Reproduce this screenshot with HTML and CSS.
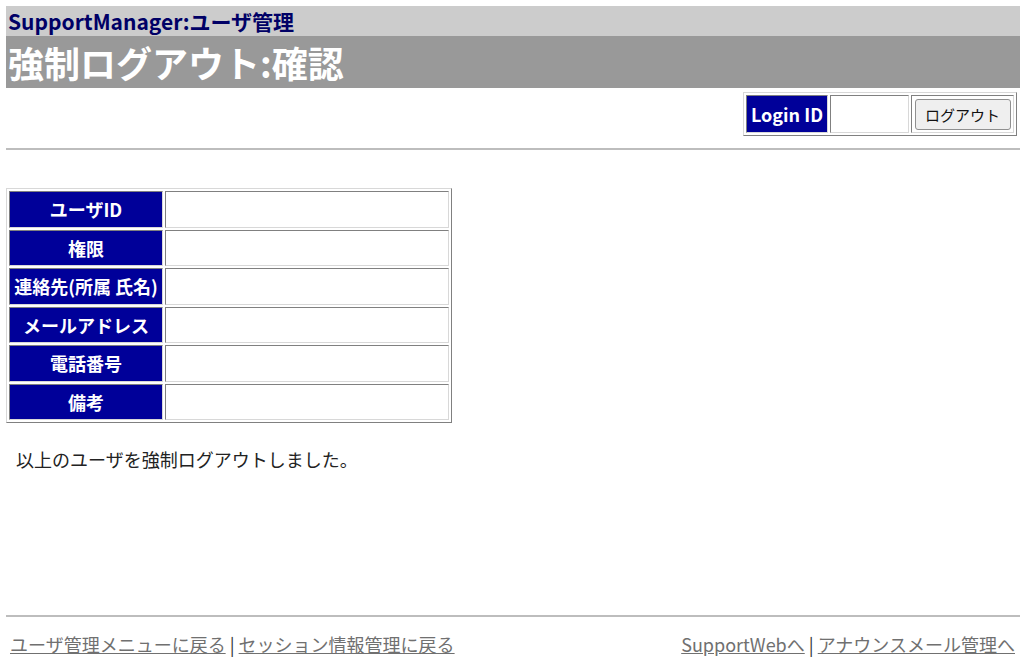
FILE: index.html
```html
<!DOCTYPE html>
<html lang="ja">
<head>
<meta charset="utf-8">
<title>強制ログアウト:確認</title>
<link rel="stylesheet" href="styles.css">
</head>
<body>
<div class="sys">SupportManager:ユーザ管理</div>
<div class="title">強制ログアウト:確認</div>
<div class="login-row">
  <table class="login">
    <tr>
      <th class="login-label">Login ID</th>
      <td class="login-id"></td>
      <td class="login-btn"><button type="button" class="btn">ログアウト</button></td>
    </tr>
  </table>
</div>
<hr class="rule">
<main class="content">
  <table class="info">
    <tr><th>ユーザID</th><td></td></tr>
    <tr><th>権限</th><td></td></tr>
    <tr><th>連絡先(所属 氏名)</th><td></td></tr>
    <tr><th>メールアドレス</th><td></td></tr>
    <tr><th>電話番号</th><td></td></tr>
    <tr><th>備考</th><td></td></tr>
  </table>
  <p class="msg">以上のユーザを強制ログアウトしました。</p>
</main>
<hr class="rule">
<footer class="foot">
  <div class="links"><a href="#">ユーザ管理メニューに戻る</a> <span class="sep">|</span> <a href="#">セッション情報管理に戻る</a></div>
  <div class="links"><a href="#">SupportWebへ</a> <span class="sep">|</span> <a href="#">アナウンスメール管理へ</a></div>
</footer>
</body>
</html>
```

FILE: styles.css
```css
html, body {
  background: #fff;
}
body {
  margin: 6px 4px 0 6px;
  font-family: "Noto Sans CJK JP", "Noto Sans", sans-serif;
  font-size: 18px;
  color: #222;
}
.sys {
  background: #cccccc;
  height: 30px;
  line-height: 31px;
  padding-left: 2px;
  font-size: 21px;
  font-weight: bold;
  color: #000066;
}
.title {
  background: #999999;
  height: 52px;
  line-height: 52px;
  padding-left: 2px;
  font-size: 36px;
  font-weight: bold;
  color: #fff;
}
.login-row {
  display: flex;
  justify-content: flex-end;
  margin-top: 4px;
  padding-right: 3px;
}
table {
  border-collapse: separate;
  border-spacing: 2px;
  border: 1px solid;
  border-color: #d8d8d8 #808080 #808080 #d8d8d8;
}
th, td {
  padding: 0;
  border: 1px solid;
  border-color: #808080 #d8d8d8 #d8d8d8 #808080;
}
.login th, .login td {
  height: 36px;
}
.login-label {
  width: 80px;
  background: #000099;
  color: #fff;
  font-weight: bold;
  font-size: 18px;
}
.login-id {
  width: 77px;
}
.login-btn {
  width: 101px;
  text-align: center;
}
.btn {
  width: 96px;
  height: 31px;
  font-family: "Noto Sans CJK JP", sans-serif;
  font-size: 15px;
  color: #111;
  background: #efefef;
  border: 1px solid #8f8f8f;
  border-radius: 3px;
  padding: 0;
}
.rule {
  margin: 12px 0 0 0;
  height: 0;
  border: 0;
  border-top: 2px solid #bdbdbd;
}
.content {
  height: 453px;
  padding-top: 38px;
  box-sizing: border-box;
}
.info th, .info td {
  height: 34.5px;
}
.info th {
  width: 152px;
  background: #000099;
  color: #fff;
  font-weight: bold;
  font-size: 18px;
  white-space: nowrap;
}
.info td {
  width: 282px;
}
.msg {
  margin: 23px 0 0 10px;
  font-size: 18px;
  color: #222;
}
.foot {
  display: flex;
  justify-content: space-between;
  padding: 14px 5px 0 4px;
}
.links {
  color: #444;
}
.links a {
  color: #707070;
  text-decoration: underline;
}
.sep {
  color: #333;
}
```
